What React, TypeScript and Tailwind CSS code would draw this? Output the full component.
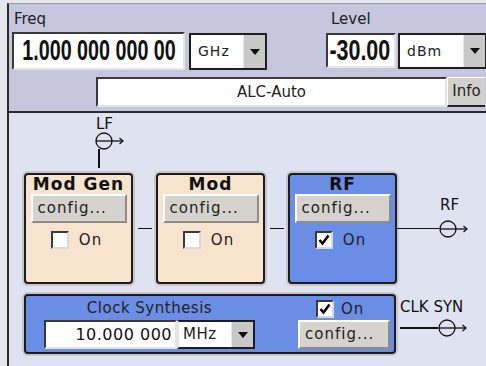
import React from "react";

const ui = "font-['DejaVu_Sans',sans-serif]";
const narrow = "font-['Liberation_Sans_Narrow','Liberation_Sans',sans-serif]";

const Arrow = () => (
  <div className="w-[22px] h-full bg-[#c8c8c8] border-l border-[#e6e6e6] flex items-center justify-center">
    <svg width="10" height="6" viewBox="0 0 10 6">
      <polygon points="0,0 10,0 5,6" fill="#111" />
    </svg>
  </div>
);

const Dropdown = ({ value, className }: { value: string; className: string }) => (
  <div className={`flex bg-white border-2 border-[#1e1e1e] ${className}`}>
    <div className={`flex-1 flex items-center pl-[7px] text-[14px] tracking-[1px] text-[#222] ${ui}`}>{value}</div>
    <Arrow />
  </div>
);

const ConfigButton = ({ className }: { className: string }) => (
  <div
    className={`bg-[#d6d3ce] border-2 border-t-white border-l-white border-b-[#8c8c8c] border-r-[#8c8c8c] flex items-center pl-[5px] text-[15px] tracking-[1px] text-[#222] ${ui} ${className}`}
  >
    config...
  </div>
);

const Check = ({ checked }: { checked?: boolean }) => (
  <div className="w-[18px] h-[18px] bg-white border-2 border-t-[#3a3a3a] border-l-[#3a3a3a] border-b-[#d8d8d8] border-r-[#d8d8d8] flex items-center justify-center">
    {checked && (
      <svg width="12" height="12" viewBox="0 0 12 12">
        <path d="M1.5 6 L4.5 9.5 L10.5 1.5" stroke="#000" strokeWidth="2.6" fill="none" />
      </svg>
    )}
  </div>
);

const Block = ({ title, blue, checked }: { title: string; blue?: boolean; checked?: boolean }) => (
  <div
    className={`w-[109px] h-[111px] rounded-[4px] border-2 border-[#1c1c1c] shadow-[0_0_0_2px_#c6c6cc] flex flex-col items-center ${
      blue ? "bg-[#6a8de6]" : "bg-[#f8e3cf]"
    }`}
  >
    <div className={`h-[19px] leading-[19px] text-[17px] font-bold tracking-[1px] whitespace-nowrap text-[#111] ${ui}`}>{title}</div>
    <ConfigButton className="w-[96px] h-[29px]" />
    <div className="flex items-center gap-[10px] mt-[6px] -ml-[4px]">
      <Check checked={checked} />
      <span className={`text-[15px] tracking-[1px] text-[#222] ${ui}`}>On</span>
    </div>
  </div>
);

const Port = () => (
  <svg width="30" height="20" viewBox="0 0 30 20" className="block">
    <circle cx="9" cy="10" r="8" fill="none" stroke="#111" strokeWidth="1.3" />
    <line x1="1" y1="10" x2="28" y2="10" stroke="#111" strokeWidth="1.3" />
    <path d="M24.5 7 L28 10 L24.5 13" fill="none" stroke="#111" strokeWidth="1.3" />
  </svg>
);

export default function App() {
  return (
    <div className="w-[486px] h-[366px] bg-[#e6e7ee] overflow-hidden pt-[3px] pl-[7px]">
      <div className="h-[363px] border-l-2 border-t border-t-[#9a9aa8] border-l-[#2a2a2a] flex flex-col">
        {/* header */}
        <div className="h-[109px] bg-[#c6c6de] border-b-2 border-[#2a2a30] pl-[3px] pt-[4px] flex flex-col">
          <div className="flex">
            <div className="flex flex-col">
              <div className={`h-[22px] pl-[2px] text-[15px] text-[#222] ${ui}`}>Freq</div>
              <div className="flex gap-[4px] mt-[2px]">
                <div className="w-[173px] h-[38px] bg-white border-2 border-t-[#3a3a3a] border-l-[#3a3a3a] border-b-[#e4e4e4] border-r-[#e4e4e4] flex items-center justify-end pr-[7px] overflow-hidden">
                  <span className={`text-[29px] font-bold text-[#111] whitespace-nowrap inline-block scale-x-[0.68] origin-right ${narrow}`}>
                    1.000 000 000 00
                  </span>
                </div>
                <Dropdown value="GHz" className="w-[78px] h-[37px] mt-[1px]" />
              </div>
            </div>
            <div className="flex flex-col ml-[59px]">
              <div className={`h-[22px] pl-[5px] text-[15px] text-[#222] ${ui}`}>Level</div>
              <div className="flex gap-[2px] mt-[3px]">
                <div className="w-[70px] h-[35px] bg-white border-2 border-t-[#3a3a3a] border-l-[#3a3a3a] border-b-[#e4e4e4] border-r-[#e4e4e4] flex items-center justify-end pr-[4px] overflow-hidden">
                  <span className={`text-[29px] font-bold text-[#111] whitespace-nowrap inline-block scale-x-[0.74] origin-right ${narrow}`}>
                    -30.00
                  </span>
                </div>
                <Dropdown value="dBm" className="w-[89px] h-[36px]" />
              </div>
            </div>
          </div>
          <div className="flex mt-[7px] ml-[84px] h-[30px]">
            <div className={`w-[351px] bg-white border-2 border-t-[#3a3a3a] border-l-[#3a3a3a] border-b-[#e4e4e4] border-r-[#e4e4e4] flex items-center justify-center text-[15px] text-[#222] ${ui}`}>
              ALC-Auto
            </div>
            <div className={`w-[38px] bg-[#d2d0cc] border-t border-l border-white border-b-2 border-b-[#222] flex items-center justify-center text-[15px] text-[#222] ${ui}`}>
              Info
            </div>
          </div>
        </div>

        {/* diagram */}
        <div className="flex-1 bg-[#dfe2f0] relative">
          <div className="absolute left-[86px] top-[4px] flex flex-col items-center">
            <span className={`text-[15px] leading-[14px] text-[#111] ${ui} -ml-[9px]`}>LF</span>
            <div className="-mr-[2px]">
              <Port />
            </div>
            <div className="w-[1.5px] h-[19px] bg-[#111] -ml-[20px] -mt-[2px]" />
          </div>

          <div className="absolute left-[15px] top-[60px] flex items-center">
            <Block title="Mod Gen" />
            <div className="w-[23px] flex justify-center">
              <div className="w-[14px] h-[1.5px] bg-[#111]" />
            </div>
            <Block title="Mod" />
            <div className="w-[23px] flex justify-center">
              <div className="w-[14px] h-[1.5px] bg-[#111]" />
            </div>
            <Block title="RF" blue checked />
            <div className="flex items-center">
              <div className="w-[42px] h-[1.5px] bg-[#111]" />
              <div className="relative">
                <span className={`absolute left-[1px] -top-[25px] text-[15px] text-[#111] ${ui}`}>RF</span>
                <Port />
              </div>
            </div>
          </div>

          <div className="absolute left-[15px] top-[181px] flex">
            <div className="w-[372px] h-[60px] rounded-[4px] border-2 border-[#1c1c1c] shadow-[0_0_0_2px_#c6c6cc] bg-[#6a8de6] flex px-[18px] pt-[2px]">
              <div className="flex flex-col items-center">
                <div className={`h-[22px] leading-[20px] text-[15px] tracking-[0.5px] text-[#222] ${ui}`}>Clock Synthesis</div>
                <div className="flex">
                  <div className={`w-[133px] h-[29px] bg-white border-2 border-t-[#3a3a3a] border-l-[#3a3a3a] border-b-[#e4e4e4] border-r-[#e4e4e4] flex items-center justify-end pr-[3px] text-[16px] tracking-[0.5px] text-[#111] ${ui}`}>
                    10.000 000
                  </div>
                  <div className="w-[78px] h-[29px] flex bg-white border-2 border-[#1e1e1e] border-l-[#e4e4e4]">
                    <div className={`flex-1 flex items-center pl-[4px] text-[15px] tracking-[0.5px] text-[#222] ${ui}`}>MHz</div>
                    <Arrow />
                  </div>
                </div>
              </div>
              <div className="flex flex-col ml-[43px] w-[92px]">
                <div className="flex items-center gap-[7px] ml-[18px] h-[22px]">
                  <Check checked />
                  <span className={`text-[15px] tracking-[1px] text-[#222] ${ui}`}>On</span>
                </div>
                <ConfigButton className="w-[92px] h-[29px]" />
              </div>
            </div>
            <div className="flex flex-col ml-[4px]">
              <span className={`text-[15px] leading-[16px] text-[#111] ${ui} mt-[5px]`}>CLK SYN</span>
              <div className="flex items-center mt-[3px]">
                <div className="w-[38px] h-[1.5px] bg-[#111]" />
                <Port />
              </div>
            </div>
          </div>
        </div>
      </div>
    </div>
  );
}
